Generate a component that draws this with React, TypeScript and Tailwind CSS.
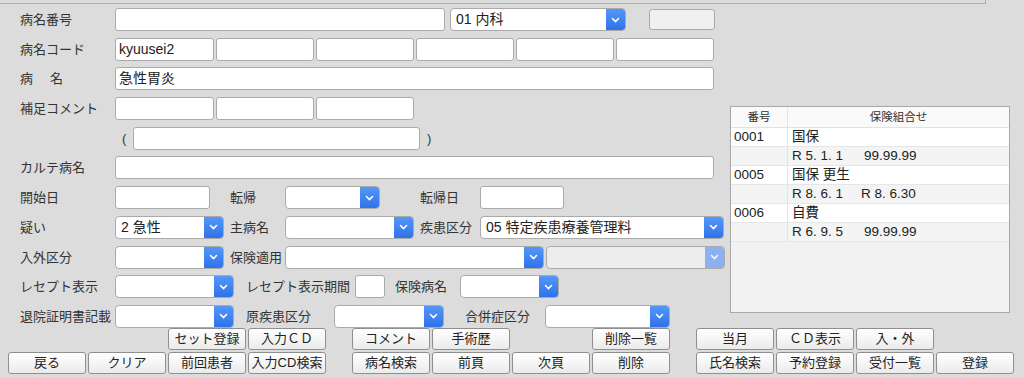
import React from "react";

const Chevron = ({ light }: { light?: boolean }) => (
  <svg width="9" height="6" viewBox="0 0 9 6">
    <path
      d="M1.5 1.5 L4.5 4.5 L7.5 1.5"
      stroke={light ? "#f2f6ff" : "white"}
      strokeWidth="1.6"
      fill="none"
      strokeLinecap="round"
    />
  </svg>
);

const Label = ({ text, className }: { text: string; className: string }) => (
  <div className={`${className} text-[13px] leading-[23px] text-[#333] whitespace-nowrap`}>{text}</div>
);

const Input = ({ className, value }: { className: string; value?: string }) => (
  <div
    className={`${className} h-[23px] bg-white border border-[#aaaaaa] rounded-[3px] px-[3px] text-[14px] leading-[21px] text-[#222] whitespace-nowrap`}
  >
    {value}
  </div>
);

const Select = ({
  className,
  value,
  disabled,
}: {
  className: string;
  value?: string;
  disabled?: boolean;
}) => (
  <div
    className={`${className} h-[23px] flex border border-[#aaaaaa] rounded-[4px] overflow-hidden ${
      disabled ? "bg-[#ededed]" : "bg-white"
    }`}
  >
    <div className="flex-1 px-[5px] text-[14px] leading-[21px] text-[#222] whitespace-nowrap">{value}</div>
    <div
      className={`w-[19px] flex items-center justify-center ${
        disabled ? "bg-[#8db0f0]" : "bg-linear-to-b from-[#5497f8] to-[#2f72ea]"
      }`}
    >
      <Chevron light={disabled} />
    </div>
  </div>
);

const Btn = ({ label }: { label?: string }) =>
  label ? (
    <div className="w-[78px] h-[22px] border border-[#8f8f8f] rounded-[3px] bg-linear-to-b from-white to-[#ebebeb] flex items-center justify-center text-[13px] text-[#222] whitespace-nowrap">
      {label}
    </div>
  ) : (
    <div className="w-[78px] h-[22px]" />
  );

const insRows = [
  { no: "0001", a: "国保" },
  { no: "", a: "R 5. 1. 1", b: "99.99.99", w: "w-[72px]" },
  { no: "0005", a: "国保 更生" },
  { no: "", a: "R 8. 6. 1", b: "R 8. 6.30", w: "w-[69px]" },
  { no: "0006", a: "自費" },
  { no: "", a: "R 6. 9. 5", b: "99.99.99", w: "w-[72px]" },
];

const row1 = ["", "", "セット登録", "入力ＣＤ", "コメント", "手術歴", "", "削除一覧", "当月", "ＣＤ表示", "入・外", ""];
const row2 = ["戻る", "クリア", "前回患者", "入力CD検索", "病名検索", "前頁", "次頁", "削除", "氏名検索", "予約登録", "受付一覧", "登録"];

const ButtonRow = ({ items }: { items: string[] }) => (
  <div className="flex pl-[8px] gap-[26px]">
    {[0, 4, 8].map((s) => (
      <div key={s} className="flex gap-[2px]">
        {items.slice(s, s + 4).map((t, i) => (
          <Btn key={i} label={t} />
        ))}
      </div>
    ))}
  </div>
);

export default function App() {
  return (
    <div className="w-[1024px] h-[378px] bg-[#dcdcdc] overflow-hidden font-['Liberation_Sans','Noto_Sans_CJK_JP',sans-serif]">
      <div className="w-[986px] h-[4px] border-b border-r border-[#b0b0b0]" />

      <div className="flex">
        {/* form */}
        <div className="w-[730px] mt-[4px] flex flex-col gap-[6.7px] pl-[20px]">
          <div className="flex items-start">
            <Label text="病名番号" className="w-[95px]" />
            <Input className="w-[330px]" />
            <Select className="w-[176px] ml-[5px]" value="01 内科" />
            <div className="w-[66px] h-[21px] mt-[1px] ml-[23px] bg-[#f0f0f0] border border-[#aaaaaa] rounded-[3px]" />
          </div>

          <div className="flex gap-[2px]">
            <Label text="病名コード" className="w-[93px]" />
            <Input className="w-[99px]" value="kyuusei2" />
            <Input className="w-[98px]" />
            <Input className="w-[98px]" />
            <Input className="w-[98px]" />
            <Input className="w-[98px]" />
            <Input className="w-[98px]" />
          </div>

          <div className="flex">
            <Label text="病　名" className="w-[95px] tracking-[2px]" />
            <Input className="w-[599px]" value="急性胃炎" />
          </div>

          <div className="flex gap-[2px]">
            <Label text="補足コメント" className="w-[93px]" />
            <Input className="w-[99px]" />
            <Input className="w-[98px]" />
            <Input className="w-[98px]" />
          </div>

          <div className="flex pl-[102px]">
            <div className="w-[11px] text-[13px] leading-[23px] text-[#333]">(</div>
            <Input className="w-[287px]" />
            <div className="ml-[7px] text-[13px] leading-[23px] text-[#333]">)</div>
          </div>

          <div className="flex">
            <Label text="カルテ病名" className="w-[95px]" />
            <Input className="w-[599px]" />
          </div>

          <div className="flex">
            <Label text="開始日" className="w-[95px]" />
            <Input className="w-[95px]" />
            <Label text="転帰" className="w-[55px] ml-[20px]" />
            <Select className="w-[95px]" />
            <Label text="転帰日" className="w-[60px] ml-[40px]" />
            <Input className="w-[84px]" />
          </div>

          <div className="flex">
            <Label text="疑い" className="w-[95px]" />
            <Select className="w-[109px]" value="2 急性" />
            <Label text="主病名" className="w-[55px] ml-[6px]" />
            <Select className="w-[129px]" />
            <Label text="疾患区分" className="w-[60px] ml-[6px]" />
            <Select className="w-[244px]" value="05 特定疾患療養管理料" />
          </div>

          <div className="flex">
            <Label text="入外区分" className="w-[95px]" />
            <Select className="w-[109px]" />
            <Label text="保険適用" className="w-[55px] ml-[6px]" />
            <Select className="w-[259px]" />
            <Select className="w-[179px] ml-[2px]" disabled />
          </div>

          <div className="flex">
            <Label text="レセプト表示" className="w-[95px]" />
            <Select className="w-[119px]" />
            <Label text="レセプト表示期間" className="w-[109px] ml-[12px]" />
            <Input className="w-[30px]" />
            <Label text="保険病名" className="w-[65px] ml-[10px]" />
            <Select className="w-[99px]" />
          </div>

          <div className="flex">
            <Label text="退院証明書記載" className="w-[95px]" />
            <Select className="w-[119px]" />
            <Label text="原疾患区分" className="w-[88px] ml-[12px]" />
            <Select className="w-[110px]" />
            <Label text="合併症区分" className="w-[80px] ml-[21px]" />
            <Select className="w-[125px]" />
          </div>
        </div>

        {/* insurance combinations */}
        <div className="mt-[102px] w-[280px] h-[207px] border border-[#a8a8a8] bg-[#f2f2f2] text-[#222]">
          <div className="flex h-[21px] bg-[#fafafa] border-b border-[#e2e2e2] text-[11.5px] leading-[20px] text-[#333]">
            <div className="w-[57px] border-r border-[#e4e4e4] text-center">番号</div>
            <div className="flex-1 text-center">保険組合せ</div>
          </div>
          {insRows.map((r, i) => (
            <div
              key={i}
              className={`flex h-[19px] border-b border-[#e6e6e6] text-[13.5px] leading-[18px] ${
                i % 2 === 0 ? "bg-white" : "bg-[#f4f4f4]"
              }`}
            >
              <div className="w-[57px] border-r border-[#e4e4e4] pl-[3px]">{r.no}</div>
              <div className="flex-1 pl-[4px] flex whitespace-nowrap">
                <span className={r.w}>{r.a}</span>
                {r.b && <span>{r.b}</span>}
              </div>
            </div>
          ))}
        </div>
      </div>

      <div className="flex flex-col gap-[2px]">
        <ButtonRow items={row1} />
        <ButtonRow items={row2} />
      </div>
    </div>
  );
}
